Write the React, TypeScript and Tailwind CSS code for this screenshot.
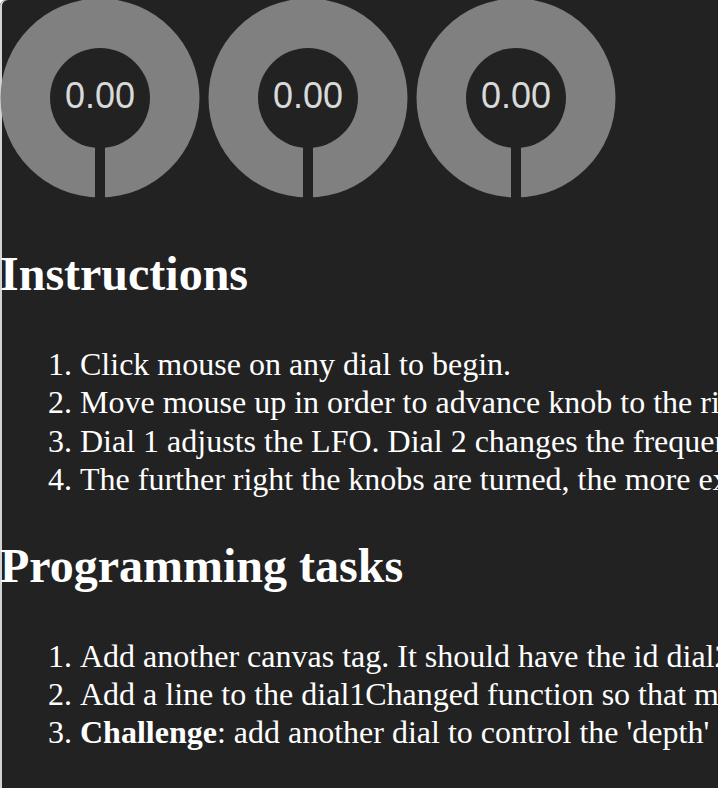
import React from 'react'

const Dial = ({ value }: { value: string }) => (
  <div className="relative w-[200px] h-[200px] shrink-0">
    <svg width="200" height="200" viewBox="0 0 200 200" className="block">
      <circle cx="100" cy="100" r="99.5" fill="#808080" />
      <circle cx="100" cy="100" r="50" fill="#222222" />
      <rect x="95" y="100" width="10" height="100" fill="#222222" />
    </svg>
    <div className="absolute left-0 top-0 w-[200px] h-[200px] flex items-center justify-center">
      <span className="text-[36px] leading-none text-[#d9d9d9] font-['Liberation_Sans',Arial,sans-serif] -mt-[4px]">
        {value}
      </span>
    </div>
  </div>
)

const instructions = [
  'Click mouse on any dial to begin.',
  'Move mouse up in order to advance knob to the right.',
  'Dial 1 adjusts the LFO. Dial 2 changes the frequency of the oscillator.',
  'The further right the knobs are turned, the more extreme the effect.',
]

export default function App() {
  return (
    <div className="w-full h-[788px] overflow-hidden bg-[#222222] text-white shadow-[inset_2px_0_0_#d4d4d4] rounded-tl-[6px] font-['Liberation_Serif','Times_New_Roman',serif]">
      {/* dials */}
      <div className="flex gap-2 -mt-[2px]">
        <Dial value="0.00" />
        <Dial value="0.00" />
        <Dial value="0.00" />
      </div>

      <h2 className="mt-[49px] text-[48px] leading-[53px] font-bold whitespace-nowrap">Instructions</h2>
      <ol className="mt-[45px] list-decimal pl-[80px] text-[32px] leading-[38.4px] whitespace-nowrap">
        {instructions.map((item) => (
          <li key={item}>{item}</li>
        ))}
      </ol>

      <h2 className="mt-[40px] text-[48px] leading-[53px] font-bold whitespace-nowrap">Programming tasks</h2>
      <ol className="mt-[45px] list-decimal pl-[80px] text-[32px] leading-[38.4px] whitespace-nowrap">
        <li>Add another canvas tag. It should have the id dial2.</li>
        <li>Add a line to the dial1Changed function so that moving the dial changes the LFO rate.</li>
        <li>
          <strong className="font-bold">Challenge</strong>: add another dial to control the 'depth' of the LFO.
        </li>
      </ol>
    </div>
  )
}
